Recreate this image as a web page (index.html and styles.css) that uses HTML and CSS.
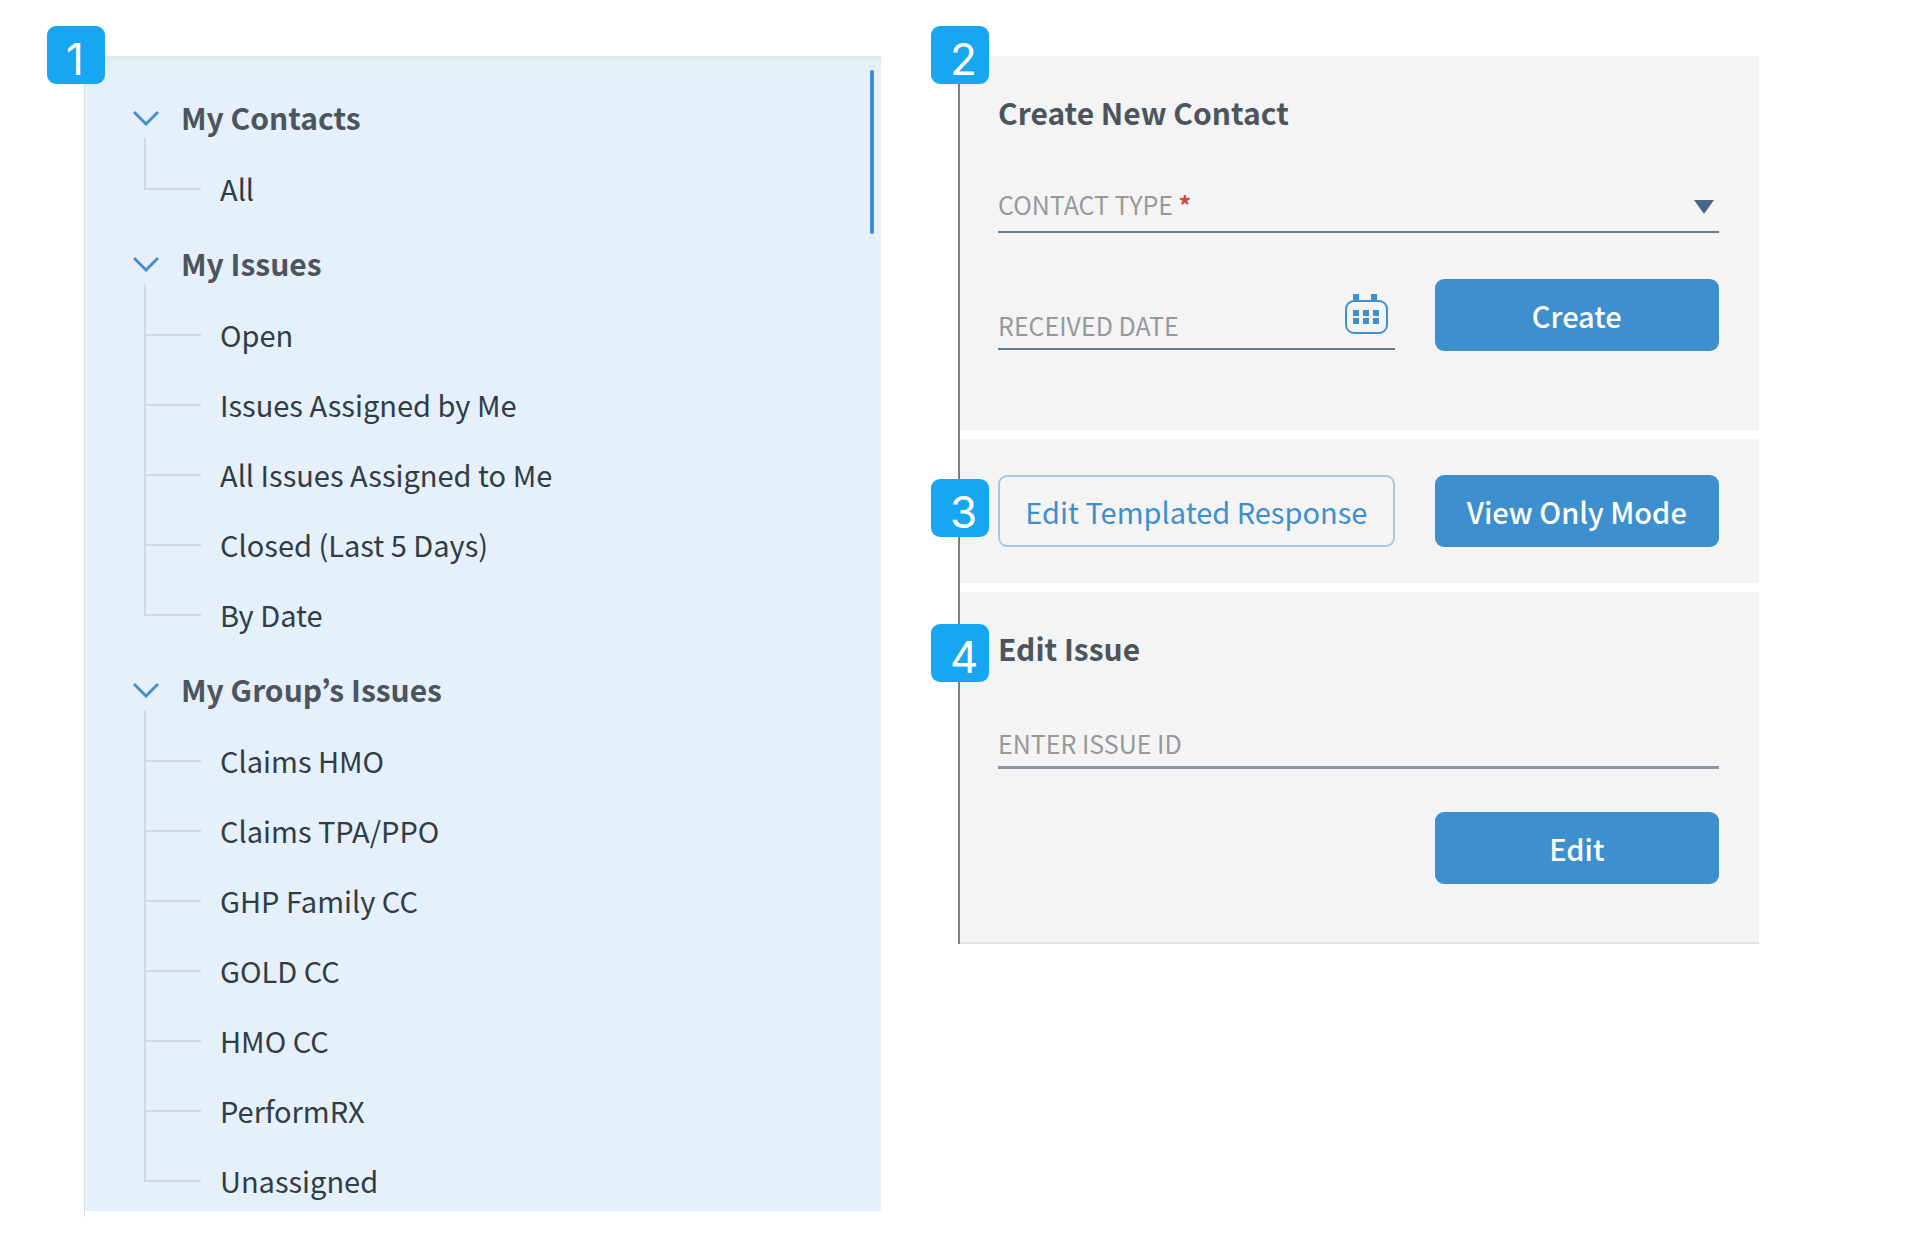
FILE: index.html
```
<!DOCTYPE html>
<html lang="en">
<head>
    <meta charset="UTF-8">
    <meta name="viewport" content="width=device-width, initial-scale=1.0">
    <title>Contacts and Issues</title>
    <link rel="stylesheet" href="styles.css">
</head>
<body>
  <main class="page">
    <aside class="sidebar">
        <span class="badge">1</span>
        <nav class="tree">
            <div class="tree-group">
                <h2 class="tree-title">
                    <svg class="chevron" viewBox="0 0 26 16"><path d="M1 2 L13 14 L25 2"/></svg>
                    My Contacts
                </h2>
                <ul class="tree-list">
                    <li><a href="#">All</a></li>
                </ul>
            </div>
            <div class="tree-group">
                <h2 class="tree-title">
                    <svg class="chevron" viewBox="0 0 26 16"><path d="M1 2 L13 14 L25 2"/></svg>
                    My Issues
                </h2>
                <ul class="tree-list">
                    <li><a href="#">Open</a></li>
                    <li><a href="#">Issues Assigned by Me</a></li>
                    <li><a href="#">All Issues Assigned to Me</a></li>
                    <li><a href="#">Closed (Last 5 Days)</a></li>
                    <li><a href="#">By Date</a></li>
                </ul>
            </div>
            <div class="tree-group">
                <h2 class="tree-title">
                    <svg class="chevron" viewBox="0 0 26 16"><path d="M1 2 L13 14 L25 2"/></svg>
                    My Group’s Issues
                </h2>
                <ul class="tree-list">
                    <li><a href="#">Claims HMO</a></li>
                    <li><a href="#">Claims TPA/PPO</a></li>
                    <li><a href="#">GHP Family CC</a></li>
                    <li><a href="#">GOLD CC</a></li>
                    <li><a href="#">HMO CC</a></li>
                    <li><a href="#">PerformRX</a></li>
                    <li><a href="#">Unassigned</a></li>
                </ul>
            </div>
        </nav>
        <div class="scroll-thumb"></div>
    </aside>

    <div class="panel">
        <form class="section section-create">
            <span class="badge">2</span>
            <h2 class="section-title">Create New Contact</h2>
            <div class="field">
                <label for="contact-type">CONTACT TYPE <span class="required">*</span></label>
                <select id="contact-type" required>
                    <option value=""></option>
                </select>
                <svg class="arrow" viewBox="0 0 20 14"><path d="M0 0 H20 L10 14 Z"/></svg>
            </div>
            <div class="row row-create">
                <div class="field field-date">
                    <label for="received-date">RECEIVED DATE</label>
                    <input type="text" id="received-date">
                    <button type="button" class="calendar-btn" aria-label="Pick a date">
                        <svg class="calendar" viewBox="0 0 43 40">
                            <rect class="calendar-frame" x="1" y="7" width="41" height="32" rx="8"/>
                            <path d="M8 0h6v7h-6z M26 0h6v7h-6z"/>
                            <path d="M8 16h6v6h-6z M18 16h6v6h-6z M28 16h6v6h-6z"/>
                            <path d="M8 24h6v6h-6z M18 24h6v6h-6z M28 24h6v6h-6z"/>
                        </svg>
                    </button>
                </div>
                <button type="button" class="btn">Create</button>
            </div>
        </form>

        <div class="section section-mode">
            <span class="badge">3</span>
            <div class="row">
                <button type="button" class="btn btn-outline">Edit Templated Response</button>
                <button type="button" class="btn">View Only Mode</button>
            </div>
        </div>

        <form class="section section-edit">
            <span class="badge">4</span>
            <h2 class="section-title">Edit Issue</h2>
            <div class="field field-issue">
                <label for="issue-id">ENTER ISSUE ID</label>
                <input type="text" id="issue-id">
            </div>
            <div class="row row-edit">
                <button type="button" class="btn">Edit</button>
            </div>
        </form>
    </div>
  </main>
</body>
</html>
```
FILE: styles.css
```
* {
    box-sizing: border-box;
}

body {
    margin: 0;
    background-color: #fff;
    color: #303c46;
    font-family: "Noto Sans CJK KR", "Noto Sans", sans-serif;
    font-size: 29px;
    line-height: 42px;
}

h2 {
    margin: 0;
    color: #4c555d;
    font-size: 30px;
    font-weight: bold;
}

button,
input,
select {
    font: inherit;
}

.page {
    display: grid;
    grid-template-columns: 797fr 801fr;
    align-items: start;
    gap: 77px;
    padding: 56px 161px 30px 84px;
}

/* Numbered markers on top of the panels */
.badge {
    position: absolute;
    top: -30px;
    left: -38px;
    width: 58px;
    height: 58px;
    padding: 8px 0 0 19px;
    border-radius: 9px;
    background-color: #16a6f2;
    color: #fff;
    font-family: Inter, sans-serif;
    font-size: 44px;
    line-height: 50px;
}

/* Sidebar tree */
.sidebar {
    position: relative;
    padding-bottom: 6px;
    border-left: 1px solid #d5e4ea;
}

.tree {
    padding-top: 23px;
    background-color: #e5f0fa;
    background-image: linear-gradient(#dbe6ef, #e4f0f5 6px, #e4f0f5 14px, #e5f0fa 16px);
}

.tree-title {
    display: flex;
    align-items: center;
    gap: 22px;
    padding: 17px 0 0 48px;
}

.chevron {
    width: 26px;
    height: 16px;
    margin-top: 2px;
    fill: none;
    stroke: #4690cd;
    stroke-width: 3;
}

.tree-list {
    margin: 0 0 0 59px;
    padding: 17px 0 0;
    list-style: none;
    background: linear-gradient(#d2d8dd, #d2d8dd) no-repeat 0 0 / 2px calc(100% - 35px);
}

.tree-list li {
    padding: 12px 0 16px 76px;
    background: linear-gradient(#d2d8dd, #d2d8dd) no-repeat 0 33px / 57px 2px;
}

.tree-list a {
    color: inherit;
    text-decoration: none;
}

.tree-group:last-child .tree-list {
    background-size: 2px calc(100% - 29px);
}

.tree-group:last-child li:last-child {
    padding-bottom: 10px;
}

.scroll-thumb {
    position: absolute;
    top: 14px;
    right: 7px;
    width: 4px;
    height: 164px;
    border-radius: 2px;
    background-color: #3f8ecd;
}

/* Right side panel */
.panel {
    display: flex;
    flex-direction: column;
    gap: 9px;
    border-left: 2px solid #7d7f81;
}

.section {
    position: relative;
    padding: 35px 40px 36px 38px;
    background-color: #f4f4f4;
}

.section .badge {
    left: -29px;
}

.section-create {
    padding-bottom: 79px;
}

.section-edit {
    padding-bottom: 58px;
    border-bottom: 2px solid #e3e3e3;
}

.section-mode {
    padding-top: 36px;
}

.section-mode .badge {
    top: 40px;
}

.section-edit .badge {
    top: 32px;
}

.section-title {
    margin-bottom: 50px;
}

.field {
    display: flex;
    align-items: center;
    padding-bottom: 6px;
    border-bottom: 2px solid #667b8e;
    color: #96999c;
    font-size: 25px;
}

.field input,
.field select {
    flex: 1;
    min-width: 0;
    height: 42px;
    padding: 0 8px;
    border: none;
    outline: none;
    appearance: none;
    background: none;
    color: #303c46;
}

.required {
    color: #cf4a45;
    font-weight: bold;
}

.arrow {
    align-self: flex-end;
    width: 20px;
    height: 14px;
    margin: 0 5px 11px 0;
    fill: #48678a;
}

.field-date {
    align-self: end;
    align-items: flex-end;
    margin-bottom: 1px;
    padding-bottom: 2px;
}

.calendar-btn {
    margin: 0 7px 12px 0;
    padding: 0;
    border: none;
    background: none;
    cursor: pointer;
}

.calendar {
    display: block;
    width: 43px;
    height: 40px;
    fill: #3d8fce;
}

.calendar-frame {
    fill: none;
    stroke: #3d8fce;
    stroke-width: 2;
}

.field-issue {
    margin-top: 53px;
    padding-bottom: 2px;
    border-bottom: 3px solid #8d95a6;
}

.row {
    display: grid;
    grid-template-columns: minmax(0, 396fr) minmax(0, 284fr);
    gap: 40px;
}

.row-create {
    margin-top: 46px;
}

.row-edit {
    margin-top: 43px;
}

.row-edit .btn {
    grid-column: 2;
}

.btn {
    height: 72px;
    padding: 0;
    border: none;
    border-radius: 9px;
    background-color: #3d8fce;
    color: #fff;
    font-weight: 500;
    cursor: pointer;
}

.btn-outline {
    border: 2px solid #a5c9e5;
    background-color: transparent;
    color: #3d8fce;
    font-weight: normal;
}
```
